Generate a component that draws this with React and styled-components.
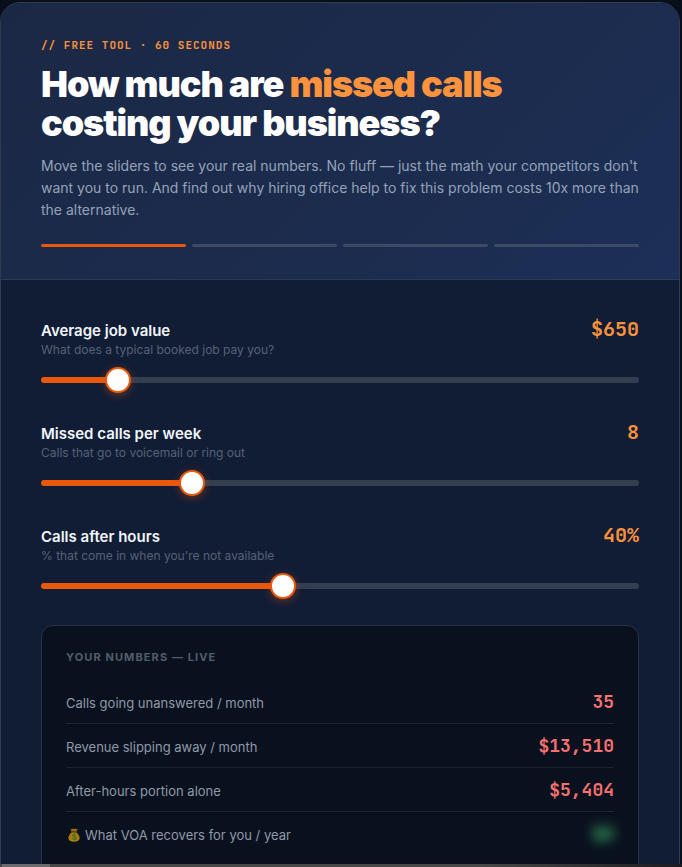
import React, { useState } from "react";
import styled, { createGlobalStyle } from "styled-components";

const sans = `"Inter", "Liberation Sans", sans-serif`;
const mono = `"JetBrains Mono", "DejaVu Sans Mono", monospace`;

const GlobalStyle = createGlobalStyle`
  *, *::before, *::after { box-sizing: border-box; }
  body {
    margin: 0;
    background: #080e1a;
    color: #ffffff;
    font-family: ${sans};
  }
  h1, h2, p, dl, dt, dd { margin: 0; }
`;

const Shell = styled.div`
  display: flex;
  flex-direction: column;
  height: 100vh;
`;

const ScrollArea = styled.div`
  flex: 1;
  min-height: 0;
  overflow: auto;
  scrollbar-width: none;
`;

const Card = styled.main`
  margin: 2px 2px 0 0;
  border: 1px solid #303b50;
  border-radius: 20px;
  overflow: hidden;
  background: #111d35;
`;

const Header = styled.header`
  padding: 35px 40px 32px;
  background: linear-gradient(135deg, #1b2845 0%, #1c2c4e 60%, #1d2f58 100%);
  border-bottom: 1px solid #2d3a57;
`;

const Eyebrow = styled.p`
  font: 700 11px/14px ${mono};
  letter-spacing: 1px;
  text-transform: uppercase;
  color: #fb923c;
`;

const Title = styled.h1`
  margin-top: 13px;
  font-size: 36px;
  font-weight: 900;
  line-height: 39px;
  letter-spacing: -0.03em;
`;

const Accent = styled.span`
  color: #fb923c;
`;

const Intro = styled.p`
  margin-top: 12px;
  font-size: 14px;
  line-height: 22px;
  color: #94a3b8;
`;

const Steps = styled.div`
  display: flex;
  gap: 6px;
  margin-top: 23px;
`;

const Step = styled.span`
  flex: 1;
  height: 3px;
  border-radius: 2px;
  background: ${(p) => (p.$active ? "#ea580c" : "#3d4965")};
`;

const Body = styled.div`
  display: flex;
  flex-direction: column;
  gap: 26px;
  padding: 36px 40px;
`;

const Field = styled.div`
  display: flex;
  flex-direction: column;
  gap: 8px;
`;

const FieldHead = styled.div`
  display: flex;
  justify-content: space-between;
  align-items: baseline;
  height: 43px;
  padding-top: 1px;
`;

const FieldLabel = styled.label`
  display: block;
  font-size: 15px;
  font-weight: 600;
  line-height: 20px;
  color: #f1f5f9;
`;

const Hint = styled.p`
  font-size: 12px;
  line-height: 18px;
  color: #566176;
`;

const FieldValue = styled.output`
  font: 700 20px/24px ${mono};
  color: #fb923c;
`;

const Slider = styled.input`
  appearance: none;
  display: block;
  width: 100%;
  height: 26px;
  margin: 0;
  cursor: pointer;
  background: transparent;

  &::-webkit-slider-runnable-track {
    height: 6px;
    border-radius: 3px;
    background: linear-gradient(
      to right,
      #ea580c var(--fill),
      #333e50 var(--fill)
    );
  }

  &::-webkit-slider-thumb {
    appearance: none;
    width: 26px;
    height: 26px;
    margin-top: -10px;
    border: 2px solid #ea580c;
    border-radius: 50%;
    background: #ffffff;
    box-shadow: 0 2px 8px rgba(234, 88, 12, 0.4);
  }
`;

const Results = styled.section`
  padding: 24px;
  border: 1px solid #2a323f;
  border-radius: 12px;
  background: #0a111e;
`;

const ResultsTitle = styled.h2`
  margin-bottom: 16px;
  font-size: 11px;
  font-weight: 700;
  line-height: 14px;
  letter-spacing: 0.1em;
  text-transform: uppercase;
  color: #545d6a;
`;

const ResultRow = styled.div`
  display: flex;
  align-items: baseline;
  justify-content: space-between;
  height: 44px;
  padding-top: 10px;
  border-bottom: 1px solid #1d2431;

  &:last-child {
    border-bottom: 0;
  }
`;

const ResultLabel = styled.dt`
  font-size: 13px;
  line-height: 20px;
  color: #8f99a8;
`;

const ResultValue = styled.dd`
  font: 700 18px/24px ${mono};
  color: ${(p) => (p.$gain ? "#4ade80" : "#f87171")};
  filter: ${(p) => (p.$gain ? "blur(6px)" : "none")};
  opacity: ${(p) => (p.$gain ? 0.9 : 1)};
`;

const BagSvg = styled.svg`
  width: 14px;
  height: 16px;
  margin: 0 4px 0 1px;
  vertical-align: -3px;
`;

const ScrollTrack = styled.div`
  flex: none;
  height: 3px;
  padding: 0 2px;
  background: linear-gradient(to right, #484848 0%, #484848 70%, #1c1c20 100%);
`;

const ScrollThumb = styled.div`
  width: 48px;
  height: 3px;
  background: #6b6b6b;
`;

const MoneyBag = () => (
  <BagSvg viewBox="0 0 14 16" aria-hidden="true">
    <path d="M3.2 1.8l1.4.5L6 1.6l1.1.7 1.2-.7 1.1.7 1.5-.5-1.5 2.7H4.7z" fill="#a06c12" />
    <path d="M4.8 5.2C2.8 6.8 1.4 8.9 1.4 11c0 2.600 2.200 3.800 5.600 3.800s5.600-1.200 5.600-3.800c0-2.100-1.400-4.200-3.400-5.800z" fill="#ad7a12" />
    <path d="M4.300 4.700h5.400" stroke="#5d3f10" strokeWidth="1" strokeLinecap="round" />
    <text x="7" y="13.200" textAnchor="middle" fontFamily="Liberation Sans" fontSize="9" fontWeight="700" fill="#2c7a1c">$</text>
  </BagSvg>
);

const money = (n) => "$" + Math.round(n).toLocaleString("en-US");

const fields = [
  {
    id: "job",
    label: "Average job value",
    hint: "What does a typical booked job pay you?",
    min: 100,
    max: 5000,
    step: 50,
    format: money,
  },
  {
    id: "missed",
    label: "Missed calls per week",
    hint: "Calls that go to voicemail or ring out",
    min: 1,
    max: 30,
    step: 1,
    format: String,
  },
  {
    id: "after",
    label: "Calls after hours",
    hint: "% that come in when you're not available",
    min: 0,
    max: 100,
    step: 5,
    format: (n) => n + "%",
  },
];

export default function App() {
  const [values, setValues] = useState({ job: 650, missed: 8, after: 40 });
  const monthly = values.missed * 4.33;
  const lost = monthly * 0.6 * values.job;

  return (
    <Shell>
      <GlobalStyle />
      <ScrollArea>
        <Card>
          <Header>
            <Eyebrow>// Free tool · 60 seconds</Eyebrow>
            <Title>
              How much are <Accent>missed calls</Accent>
              <br />
              costing your business?
            </Title>
            <Intro>
              Move the sliders to see your real numbers. No fluff — just the
              math your competitors don't want you to run. And find out why
              hiring office help to fix this problem costs 10x more than the
              alternative.
            </Intro>
            <Steps>
              <Step $active />
              <Step />
              <Step />
              <Step />
            </Steps>
          </Header>
          <Body>
            {fields.map((f) => {
              const value = values[f.id];
              const fill = ((value - f.min) / (f.max - f.min)) * 100;
              return (
                <Field key={f.id}>
                  <FieldHead>
                    <div>
                      <FieldLabel htmlFor={f.id}>{f.label}</FieldLabel>
                      <Hint id={f.id + "-hint"}>{f.hint}</Hint>
                    </div>
                    <FieldValue htmlFor={f.id}>{f.format(value)}</FieldValue>
                  </FieldHead>
                  <Slider
                    id={f.id}
                    type="range"
                    min={f.min}
                    max={f.max}
                    step={f.step}
                    value={value}
                    aria-describedby={f.id + "-hint"}
                    style={{ "--fill": fill + "%" }}
                    onChange={(e) =>
                      setValues({ ...values, [f.id]: Number(e.target.value) })
                    }
                  />
                </Field>
              );
            })}
            <Results>
              <ResultsTitle>Your numbers — live</ResultsTitle>
              <dl>
                <ResultRow>
                  <ResultLabel>Calls going unanswered / month</ResultLabel>
                  <ResultValue>{Math.round(monthly)}</ResultValue>
                </ResultRow>
                <ResultRow>
                  <ResultLabel>Revenue slipping away / month</ResultLabel>
                  <ResultValue>{money(lost)}</ResultValue>
                </ResultRow>
                <ResultRow>
                  <ResultLabel>After-hours portion alone</ResultLabel>
                  <ResultValue>{money((lost * values.after) / 100)}</ResultValue>
                </ResultRow>
                <ResultRow>
                  <ResultLabel>
                    <MoneyBag />
                    What VOA recovers for you / year
                  </ResultLabel>
                  <ResultValue $gain>$0</ResultValue>
                </ResultRow>
              </dl>
            </Results>
          </Body>
        </Card>
      </ScrollArea>
      <ScrollTrack>
        <ScrollThumb />
      </ScrollTrack>
    </Shell>
  );
}
